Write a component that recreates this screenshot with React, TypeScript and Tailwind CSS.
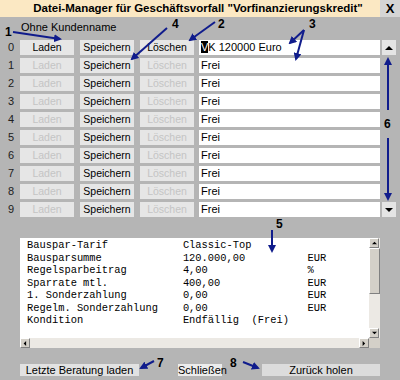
import React from "react"

const rows = [
  "VK 120000 Euro",
  "Frei",
  "Frei",
  "Frei",
  "Frei",
  "Frei",
  "Frei",
  "Frei",
  "Frei",
  "Frei",
]

const lines = [
  "Bauspar-Tarif            Classic-Top",
  "Bausparsumme             120.000,00          EUR",
  "Regelsparbeitrag         4,00                %",
  "Sparrate mtl.            400,00              EUR",
  "1. Sonderzahlung         0,00                EUR",
  "Regelm. Sonderzahlung    0,00                EUR",
  "Kondition                Endfällig  (Frei)",
]

function Tri({ dir, size = 7 }: { dir: "up" | "down" | "left" | "right"; size?: number }) {
  const pts = {
    up: "0,5 4,1 8,5",
    down: "0,1 8,1 4,5",
    left: "5,0 5,8 1,4",
    right: "1,0 1,8 5,4",
  }[dir]
  const vb = dir === "up" || dir === "down" ? "0 0 8 6" : "0 0 6 8"
  return (
    <svg width={dir === "up" || dir === "down" ? size : size * 0.75} height={dir === "up" || dir === "down" ? size * 0.75 : size} viewBox={vb}>
      <polygon points={pts} fill="#000" />
    </svg>
  )
}

function ScrollBtn({ dir }: { dir: "up" | "down" | "left" | "right" }) {
  return (
    <div className="flex size-[10px] items-center justify-center border-t border-l border-t-white border-l-white border-r border-b border-r-[#808080] border-b-[#808080] bg-[#d4d0c8]">
      <Tri dir={dir} size={5} />
    </div>
  )
}

function Annotations() {
  const c = "#101c8c"
  return (
    <svg className="pointer-events-none absolute inset-0" width={400} height={380} viewBox="0 0 400 380">
      <defs>
        <marker id="ah" markerWidth="4" markerHeight="4" refX="3" refY="2" orient="auto" markerUnits="strokeWidth">
          <polygon points="0,0 4,2 0,4" fill={c} />
        </marker>
      </defs>
      <g stroke={c} strokeWidth={2} fill="none" markerEnd="url(#ah)">
        <line x1={13} y1={32} x2={60} y2={39} />
        <line x1={167} y1={28} x2={132} y2={59} />
        <line x1={215} y1={22} x2={190} y2={40} />
        <line x1={304} y1={30} x2={290} y2={43} />
        <line x1={304} y1={30} x2={296} y2={59} />
        <line x1={388} y1={110} x2={388} y2={59} />
        <line x1={388} y1={138} x2={388} y2={199} />
        <line x1={272} y1={230} x2={272} y2={251} />
        <line x1={154} y1={361} x2={141} y2={368} />
        <line x1={243} y1={362} x2={258} y2={368} />
      </g>
      <g fontFamily="'Liberation Sans', Arial, sans-serif" fontWeight="bold" fontSize="12" fill="#000">
        <text x={5} y={36}>1</text>
        <text x={172} y={28}>4</text>
        <text x={218} y={28}>2</text>
        <text x={309} y={28}>3</text>
        <text x={384} y={128}>6</text>
        <text x={276} y={228}>5</text>
        <text x={157} y={367}>7</text>
        <text x={230} y={367}>8</text>
      </g>
    </svg>
  )
}

export default function App() {
  return (
    <div className="relative h-[380px] w-[400px] overflow-hidden bg-[#b5b5b5] font-['Liberation_Sans',Arial,sans-serif] text-[11px] text-black">
      <div className="flex h-[17px]">
        <div className="flex flex-1 items-center justify-center bg-[#fbe8c3] pl-[16px] text-[11.5px] font-bold">
          Datei-Manager für Geschäftsvorfall "Vorfinanzierungskredit"
        </div>
        <div className="flex w-[20px] items-center justify-center bg-[#d5d5d5] text-[13px] font-bold">X</div>
      </div>

      <div className="mt-[4px] h-[13px] pl-[21px] leading-[13px]">Ohne Kundenname</div>

      <div className="mt-[6px] flex flex-col gap-[3px]">
        {rows.map((text, i) => (
          <div key={i} className="flex h-[15px] items-stretch">
            <div className="w-[20px] pl-[8px] leading-[15px] text-[#202020]">{i}</div>
            <button className={`w-[54px] bg-[#e6e6e6] text-[10.5px] leading-[15px] ${i === 0 ? "text-black" : "text-[#c4c4c4]"}`}>Laden</button>
            <button className="ml-[6px] w-[54px] bg-[#e6e6e6] text-[10.5px] leading-[15px]">Speichern</button>
            <button className={`ml-[6px] w-[54px] bg-[#e6e6e6] text-[10.5px] leading-[15px] ${i === 0 ? "text-black" : "text-[#c4c4c4]"}`}>Löschen</button>
            <div className="ml-[5px] w-[181px] bg-white pl-[2px] leading-[15px]">
              {i === 0 ? (
                <>
                  <span className="bg-black text-white">V</span>K 120000 Euro
                </>
              ) : (
                text
              )}
            </div>
            <div className="ml-[2px] flex w-[14px] items-center justify-center">
              {i === 0 && (
                <div className="flex h-[15px] w-[14px] items-center justify-center bg-[#e4e4e4]">
                  <Tri dir="up" size={8} />
                </div>
              )}
              {i === 9 && (
                <div className="flex h-[15px] w-[14px] items-center justify-center bg-[#e4e4e4]">
                  <Tri dir="down" size={8} />
                </div>
              )}
            </div>
          </div>
        ))}
      </div>

      <div className="ml-[20px] mt-[21px] flex h-[110px] w-[360px] flex-col bg-white">
        <div className="flex h-[100px]">
          <pre className="flex-1 overflow-hidden pl-[7px] pt-[1px] font-['Liberation_Mono','Courier_New',monospace] text-[10.4px] leading-[12.5px]">
            {lines.join("\n")}
          </pre>
          <div className="flex w-[11px] flex-col bg-[#ece9e4]">
            <ScrollBtn dir="up" />
            <div className="h-[46px] border-t border-l border-t-white border-l-white border-r border-b border-r-[#808080] border-b-[#808080] bg-[#d4d0c8]" />
            <div className="flex-1" />
            <ScrollBtn dir="down" />
          </div>
        </div>
        <div className="flex h-[10px]">
          <div className="flex flex-1 bg-[#ece9e4]">
            <ScrollBtn dir="left" />
            <div className="flex-1" />
            <ScrollBtn dir="right" />
          </div>
          <div className="w-[11px] bg-[#d4d0c8]" />
        </div>
      </div>

      <div className="mt-[16px] flex h-[12px] leading-[12px]">
        <button className="ml-[20px] w-[119px] bg-[#e2e2e2] leading-[12px]">Letzte Beratung laden</button>
        <button className="ml-[39px] w-[44px] bg-[#ececec] leading-[12px]">Schließen</button>
        <button className="ml-[40px] w-[118px] bg-[#dcdcdc] leading-[12px]">Zurück holen</button>
      </div>

      <Annotations />
    </div>
  )
}
